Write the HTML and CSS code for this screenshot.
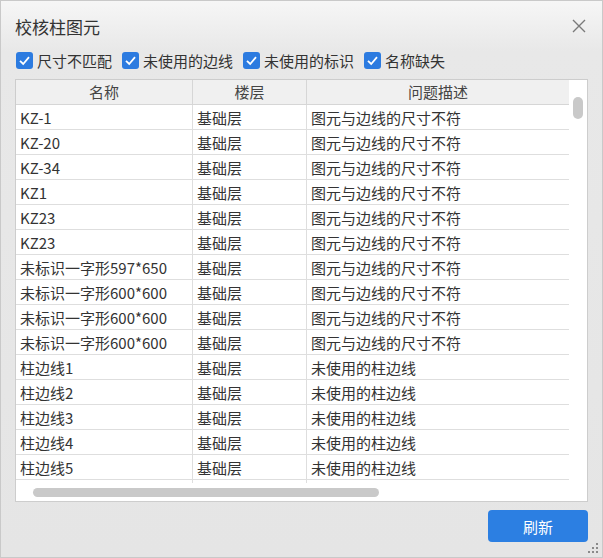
FILE: index.html
```html
<!DOCTYPE html>
<html lang="zh-CN">
<head>
    <meta charset="UTF-8">
    <meta name="viewport" content="width=device-width, initial-scale=1.0">
    <title>校核柱图元</title>
    <link rel="stylesheet" href="styles.css">
</head>
<body>
    <div class="dialog">
        <div class="titlebar">
            <span class="title">校核柱图元</span>
            <svg class="close" width="14" height="14" viewBox="0 0 14 14">
                <path d="M1 1 L13 13 M13 1 L1 13" stroke="#7a7a7a" stroke-width="1.4" fill="none"/>
            </svg>
        </div>

        <div class="filters">
            <label class="check">
                <svg width="17" height="17" viewBox="0 0 17 17"><rect width="17" height="17" rx="3" fill="#2c7be0"/><path d="M4 8.8 L7.2 12 L13 5.2" stroke="#fff" stroke-width="1.8" fill="none"/></svg>
                <span>尺寸不匹配</span>
            </label>
            <label class="check">
                <svg width="17" height="17" viewBox="0 0 17 17"><rect width="17" height="17" rx="3" fill="#2c7be0"/><path d="M4 8.8 L7.2 12 L13 5.2" stroke="#fff" stroke-width="1.8" fill="none"/></svg>
                <span>未使用的边线</span>
            </label>
            <label class="check">
                <svg width="17" height="17" viewBox="0 0 17 17"><rect width="17" height="17" rx="3" fill="#2c7be0"/><path d="M4 8.8 L7.2 12 L13 5.2" stroke="#fff" stroke-width="1.8" fill="none"/></svg>
                <span>未使用的标识</span>
            </label>
            <label class="check">
                <svg width="17" height="17" viewBox="0 0 17 17"><rect width="17" height="17" rx="3" fill="#2c7be0"/><path d="M4 8.8 L7.2 12 L13 5.2" stroke="#fff" stroke-width="1.8" fill="none"/></svg>
                <span>名称缺失</span>
            </label>
        </div>

        <div class="table">
            <div class="table-main">
                <div class="grid">
                    <div class="row head">
                        <div class="cell">名称</div>
                        <div class="cell">楼层</div>
                        <div class="cell">问题描述</div>
                    </div>
                    <div class="row"><div class="cell">KZ-1</div><div class="cell">基础层</div><div class="cell">图元与边线的尺寸不符</div></div>
                    <div class="row"><div class="cell">KZ-20</div><div class="cell">基础层</div><div class="cell">图元与边线的尺寸不符</div></div>
                    <div class="row"><div class="cell">KZ-34</div><div class="cell">基础层</div><div class="cell">图元与边线的尺寸不符</div></div>
                    <div class="row"><div class="cell">KZ1</div><div class="cell">基础层</div><div class="cell">图元与边线的尺寸不符</div></div>
                    <div class="row"><div class="cell">KZ23</div><div class="cell">基础层</div><div class="cell">图元与边线的尺寸不符</div></div>
                    <div class="row"><div class="cell">KZ23</div><div class="cell">基础层</div><div class="cell">图元与边线的尺寸不符</div></div>
                    <div class="row"><div class="cell">未标识一字形597*650</div><div class="cell">基础层</div><div class="cell">图元与边线的尺寸不符</div></div>
                    <div class="row"><div class="cell">未标识一字形600*600</div><div class="cell">基础层</div><div class="cell">图元与边线的尺寸不符</div></div>
                    <div class="row"><div class="cell">未标识一字形600*600</div><div class="cell">基础层</div><div class="cell">图元与边线的尺寸不符</div></div>
                    <div class="row"><div class="cell">未标识一字形600*600</div><div class="cell">基础层</div><div class="cell">图元与边线的尺寸不符</div></div>
                    <div class="row"><div class="cell">柱边线1</div><div class="cell">基础层</div><div class="cell">未使用的柱边线</div></div>
                    <div class="row"><div class="cell">柱边线2</div><div class="cell">基础层</div><div class="cell">未使用的柱边线</div></div>
                    <div class="row"><div class="cell">柱边线3</div><div class="cell">基础层</div><div class="cell">未使用的柱边线</div></div>
                    <div class="row"><div class="cell">柱边线4</div><div class="cell">基础层</div><div class="cell">未使用的柱边线</div></div>
                    <div class="row"><div class="cell">柱边线5</div><div class="cell">基础层</div><div class="cell">未使用的柱边线</div></div>
                    <div class="row"><div class="cell"></div><div class="cell"></div><div class="cell"></div></div>
                </div>
                <div class="hscroll"><div class="hthumb"></div></div>
            </div>
            <div class="vscroll"><div class="vthumb"></div></div>
        </div>

        <div class="footer">
            <button class="refresh-btn">刷新</button>
        </div>

        <svg class="grip" width="10" height="10" viewBox="0 0 10 10">
            <rect x="8" y="0" width="2" height="2" fill="#8a8a8a"/>
            <rect x="4" y="4" width="2" height="2" fill="#8a8a8a"/>
            <rect x="8" y="4" width="2" height="2" fill="#8a8a8a"/>
            <rect x="0" y="8" width="2" height="2" fill="#8a8a8a"/>
            <rect x="4" y="8" width="2" height="2" fill="#8a8a8a"/>
            <rect x="8" y="8" width="2" height="2" fill="#8a8a8a"/>
        </svg>
    </div>
</body>
</html>
```

FILE: styles.css
```css
body {
    margin: 0;
    font-family: "Noto Sans CJK SC", "Noto Sans", sans-serif;
    color: #333;
}
.dialog {
    position: relative;
    width: 603px;
    height: 558px;
    box-sizing: border-box;
    border: 1px solid #c9c9c9;
    background: linear-gradient(to bottom, #f6f6f6 0px, #e8e8e8 50px, #e5e5e5 100%);
    display: flex;
    flex-direction: column;
}
.titlebar {
    height: 50px;
    display: flex;
    align-items: center;
    justify-content: space-between;
    padding: 0 16px 0 14px;
}
.title {
    font-size: 17px;
    color: #333;
}
.filters {
    height: 18px;
    display: flex;
    align-items: center;
    padding-left: 15px;
    gap: 10px;
    margin-bottom: 10px;
}
.check {
    display: flex;
    align-items: center;
    gap: 4px;
    font-size: 15px;
    color: #333;
}
.check svg {
    display: block;
}
.table {
    margin: 0 14px;
    height: 423px;
    box-sizing: border-box;
    border: 1px solid #cdcdcd;
    background: #fff;
    display: flex;
}
.table-main {
    flex: 1;
    display: flex;
    flex-direction: column;
    min-width: 0;
}
.grid {
    height: 403px;
    overflow: hidden;
}
.row {
    display: grid;
    grid-template-columns: 177px 114px 1fr;
    height: 25px;
    box-sizing: border-box;
    border-bottom: 1px solid #dedede;
    font-size: 15px;
    line-height: 23px;
}
.cell {
    padding: 1px 0 0 4px;
    border-right: 1px solid #dedede;
    white-space: nowrap;
    overflow: hidden;
}
.cell:last-child {
    border-right: none;
}
.head {
    background: #f0f0f0;
    border-bottom-color: #d6d6d6;
    color: #444;
}
.head .cell {
    text-align: center;
    padding: 0;
    line-height: 24px;
    border-right-color: #d6d6d6;
}
.hscroll {
    height: 18px;
}
.hthumb {
    margin: 5px 0 0 17px;
    width: 346px;
    height: 9px;
    border-radius: 5px;
    background: #c9c9c9;
}
.vscroll {
    width: 18px;
}
.vthumb {
    margin: 17px 0 0 4px;
    width: 10px;
    height: 22px;
    border-radius: 5px;
    background: #c9c9c9;
}
.footer {
    display: flex;
    justify-content: flex-end;
    padding: 8px 14px 0 0;
}
.refresh-btn {
    width: 100px;
    height: 32px;
    border: none;
    border-radius: 4px;
    background-color: #2c7fe2;
    color: #fff;
    font-family: "Noto Sans CJK SC", sans-serif;
    font-size: 15px;
}
.grip {
    position: absolute;
    right: 4px;
    bottom: 4px;
}
```
